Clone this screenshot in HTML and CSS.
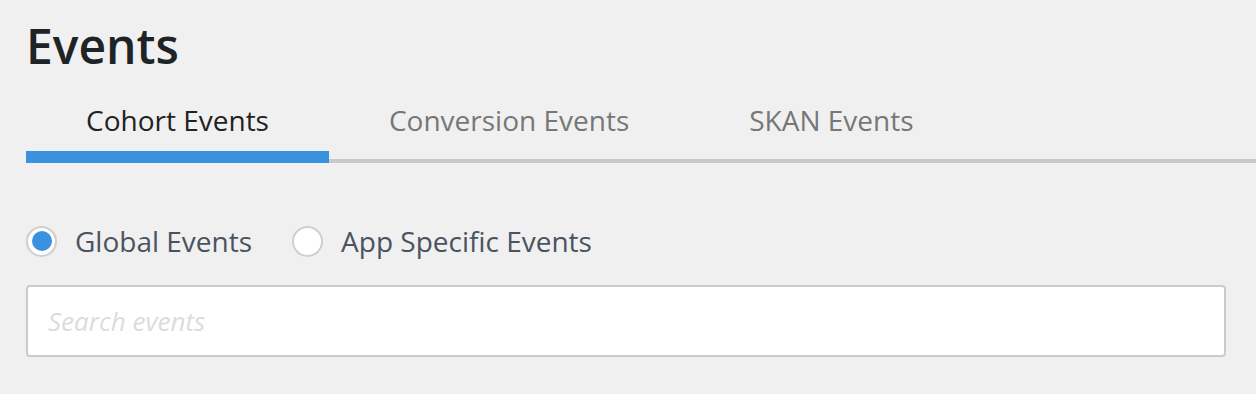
FILE: index.html
```html
<!DOCTYPE html>
<html>
<head>
<meta charset="utf-8">
<link rel="stylesheet" href="styles.css">
</head>
<body>
<div class="page">
  <h1 class="title">Events</h1>
  <div class="tabs">
    <div class="tab active">Cohort Events</div>
    <div class="tab">Conversion Events</div>
    <div class="tab">SKAN Events</div>
  </div>
  <div class="content">
    <div class="radios">
      <label class="radio checked"><span class="circle"><span class="dot"></span></span><span class="label">Global Events</span></label>
      <label class="radio"><span class="circle"></span><span class="label">App Specific Events</span></label>
    </div>
    <div class="search"><input class="search-input" type="text" placeholder="Search events"></div>
  </div>
</div>
</body>
</html>
```
FILE: styles.css
```css
html, body {
  margin: 0;
  padding: 0;
  background: #f0f0f0;
  font-family: "Open Sans", sans-serif;
}
.page {
  padding: 13px 0 0 26px;
}
.title {
  margin: 0;
  font-size: 48px;
  font-weight: 600;
  color: #1e2326;
  line-height: 65px;
}
.tabs {
  display: flex;
  margin-top: 12px;
  box-shadow: inset 0 -4px 0 #c9c9c9;
}
.tab {
  font-size: 28px;
  color: #777;
  padding: 12px 60px 13px;
  border-bottom: 12px solid transparent;
  line-height: 36px;
}
.tab.active {
  color: #222;
  border-bottom-color: #3a91e0;
}
.content {
  padding-right: 30px;
}
.radios {
  display: flex;
  align-items: center;
  gap: 40px;
  margin-top: 60px;
}
.radio {
  display: flex;
  align-items: center;
  gap: 18px;
}
.circle {
  box-sizing: border-box;
  width: 31px;
  height: 31px;
  border: 2px solid #cfcfcf;
  border-radius: 50%;
  background: #fff;
  display: flex;
  align-items: center;
  justify-content: center;
}
.dot {
  width: 20px;
  height: 20px;
  border-radius: 50%;
  background: #3a91e0;
}
.label {
  font-size: 28px;
  color: #4b5360;
  line-height: 36px;
}
.search {
  margin-top: 26px;
}
.search-input {
  box-sizing: border-box;
  display: block;
  width: 100%;
  height: 72px;
  border: 2px solid #cbcbcb;
  border-radius: 4px;
  background: #fff;
  padding: 0 20px;
  font-family: "Open Sans", sans-serif;
  font-size: 26px;
  outline: none;
}
.search-input::placeholder {
  color: #dcdcdc;
  font-style: italic;
}
```
